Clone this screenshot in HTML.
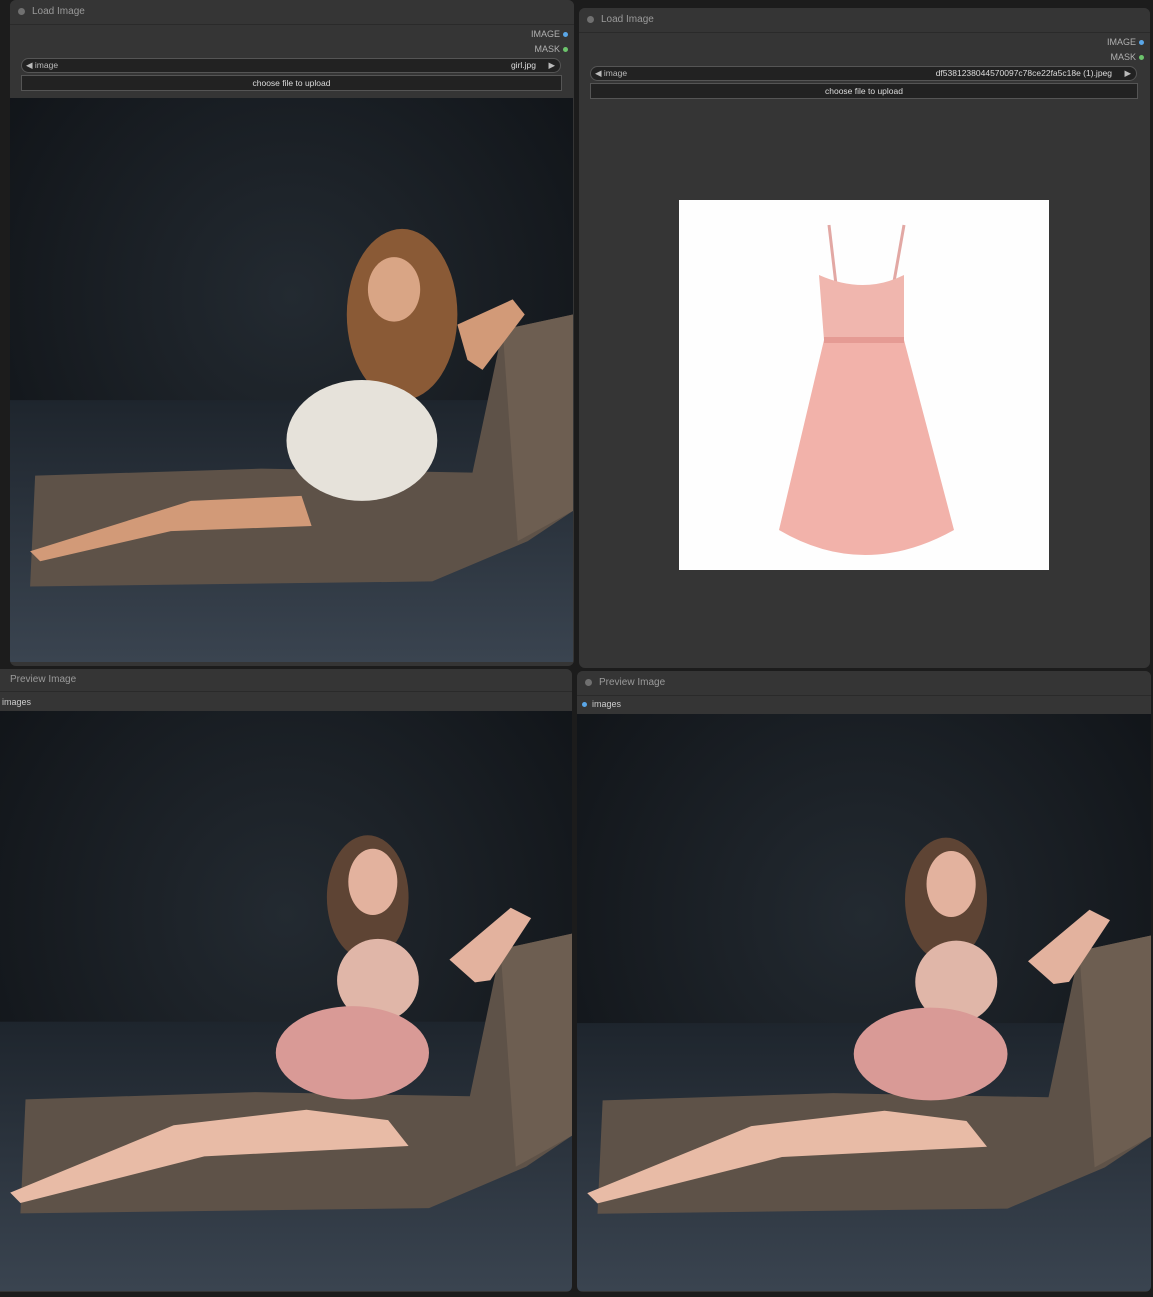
<!DOCTYPE html>
<html><head><meta charset="utf-8"><style>
body{margin:0;width:1153px;height:1297px;background:#1c1c1c;position:relative;overflow:hidden;font-family:"Liberation Sans",sans-serif;}
.node{position:absolute;background:#353535;border-radius:6px;overflow:hidden;}
.title{height:24px;background:#353535;border-bottom:1px solid #2a2a2a;color:#9a9a9a;font-size:10px;line-height:24px;padding-left:22px;position:relative}
.title.d:before{content:"";position:absolute;left:8px;top:8px;width:7px;height:7px;border-radius:50%;background:#707070}
.out{position:absolute;right:14px;font-size:9px;color:#b0b0b0}
.dot{position:absolute;width:5px;height:5px;border-radius:50%}
.combo{position:absolute;height:13px;border:1px solid #555;border-radius:8px;background:#222;font-size:8.5px;color:#bbb;line-height:13px}
.btn{position:absolute;height:14px;border:1px solid #555;background:#222;font-size:8.5px;color:#ddd;line-height:14px;text-align:center}
svg{position:absolute;display:block}
</style></head><body>
<svg width="0" height="0" style="position:absolute">
<defs>
<radialGradient id="bg" cx="0.5" cy="0.35" r="0.7"><stop offset="0" stop-color="#232a31"/><stop offset="1" stop-color="#0f1216"/></radialGradient>
<linearGradient id="fl" x1="0" y1="0" x2="0" y2="1"><stop offset="0" stop-color="#1e252d"/><stop offset="1" stop-color="#3a4450"/></linearGradient>
<g id="scene">
<rect width="560" height="560" fill="url(#bg)"/>
<rect y="300" width="560" height="260" fill="url(#fl)"/>
<polygon points="20,485 25,375 250,368 460,372 490,230 560,215 560,410 515,440 420,480" fill="#5e5248"/>
<polygon points="490,230 560,215 560,410 505,440" fill="#6d5e51"/>
</g>
<g id="girlW">
<ellipse cx="390" cy="215" rx="55" ry="85" fill="#8a5a36"/>
<ellipse cx="382" cy="190" rx="26" ry="32" fill="#d9a585"/>
<ellipse cx="350" cy="340" rx="75" ry="60" fill="#e6e2da"/>
<polygon points="20,450 180,400 290,395 300,425 160,430 30,460" fill="#d29a78"/>
<polygon points="445,225 500,200 512,215 470,270 455,260" fill="#d29a78"/>
</g>
<g id="girlP">
<ellipse cx="360" cy="180" rx="40" ry="60" fill="#5e4434"/>
<ellipse cx="365" cy="165" rx="24" ry="32" fill="#e3b29e"/>
<ellipse cx="370" cy="260" rx="40" ry="40" fill="#e0b6a8"/>
<ellipse cx="345" cy="330" rx="75" ry="45" fill="#d99a96"/>
<polygon points="10,465 170,400 300,385 380,395 400,420 200,430 20,475" fill="#e8bba6"/>
<polygon points="440,240 500,190 520,200 480,260 465,262" fill="#e3b29e"/>
</g>
</defs></svg>

<!-- Node 1 -->
<div class="node" style="left:10px;top:0;width:564px;height:666px">
<div class="title d">Load Image</div>
<div class="out" style="top:29px">IMAGE</div><div class="dot" style="right:6px;top:32px;background:#5aa7e8"></div>
<div class="out" style="top:44px">MASK</div><div class="dot" style="right:6px;top:47px;background:#6cc46c"></div>
<div class="combo" style="left:11px;top:58px;width:538px"><span style="position:absolute;left:4px">◀ image</span><span style="position:absolute;right:24px;color:#ddd">girl.jpg</span><span style="position:absolute;right:5px">▶</span></div>
<div class="btn" style="left:11px;top:75px;width:539px">choose file to upload</div>
<svg style="left:0;top:98px" width="563" height="564" viewBox="0 0 560 560" preserveAspectRatio="none"><use href="#scene"/><use href="#girlW"/></svg>
</div>

<!-- Node 2 -->
<div class="node" style="left:579px;top:8px;width:571px;height:660px">
<div class="title d">Load Image</div>
<div class="out" style="top:29px">IMAGE</div><div class="dot" style="right:6px;top:32px;background:#5aa7e8"></div>
<div class="out" style="top:44px">MASK</div><div class="dot" style="right:6px;top:47px;background:#6cc46c"></div>
<div class="combo" style="left:11px;top:58px;width:545px"><span style="position:absolute;left:4px">◀ image</span><span style="position:absolute;right:24px;color:#ddd">df5381238044570097c78ce22fa5c18e (1).jpeg</span><span style="position:absolute;right:5px">▶</span></div>
<div class="btn" style="left:11px;top:75px;width:546px">choose file to upload</div>
<svg style="left:100px;top:192px" width="370" height="370" viewBox="0 0 370 370">
<rect width="370" height="370" fill="#fefefe"/>
<path d="M150 25 L160 110 L210 110 L225 25" stroke="#e2a8a4" stroke-width="3" fill="none"/>
<path d="M140 75 Q185 95 225 75 L225 140 L145 140 Z" fill="#f0b6ae"/>
<path d="M145 140 L225 140 L275 330 Q185 380 100 330 Z" fill="#f2b2aa"/>
<path d="M145 140 L225 140" stroke="#e59b94" stroke-width="6"/>
</svg>
</div>

<!-- Node 3 -->
<div class="node" style="left:0;top:669px;width:572px;height:623px;border-radius:0 6px 6px 0">
<div class="title" style="height:22px;line-height:22px;padding-left:10px">Preview Image</div>
<div style="position:absolute;left:2px;top:28px;font-size:9px;color:#ccc">images</div>
<svg style="left:0;top:42px" width="572" height="580" viewBox="0 0 560 560" preserveAspectRatio="none"><use href="#scene"/><use href="#girlP"/></svg>
</div>

<!-- Node 4 -->
<div class="node" style="left:577px;top:671px;width:574px;height:621px">
<div class="title d">Preview Image</div>
<div class="dot" style="left:5px;top:31px;background:#5aa7e8"></div>
<div style="position:absolute;left:15px;top:28px;font-size:9px;color:#ccc">images</div>
<svg style="left:0;top:43px" width="574" height="577" viewBox="0 0 560 560" preserveAspectRatio="none"><use href="#scene"/><use href="#girlP"/></svg>
</div>
</body></html>
